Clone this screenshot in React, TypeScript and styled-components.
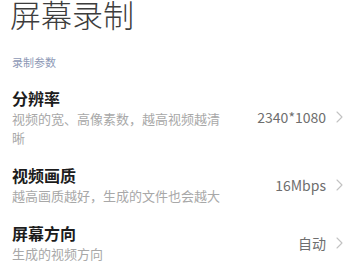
import React from 'react';
import styled, { createGlobalStyle } from 'styled-components';

const GlobalStyle = createGlobalStyle`
  html, body {
    margin: 0;
    padding: 0;
    background: #ffffff;
  }
  body {
    font-family: "Noto Sans CJK SC", "Noto Sans", sans-serif;
  }
`;

const Page = styled.div`
  width: 360px;
  height: 270px;
  overflow: hidden;
  background: #ffffff;
`;

const Title = styled.h1`
  margin: -2px 0 0 0;
  padding: 0 0 0 10px;
  font-size: 31px;
  font-weight: 300;
  line-height: 31px;
  color: #3d3d3d;
`;

const SectionLabel = styled.div`
  margin-top: 25px;
  padding-left: 12px;
  font-size: 11px;
  line-height: 16px;
  color: #8e99b6;
`;

const List = styled.div`
  margin-top: 9px;
  display: flex;
  flex-direction: column;
`;

const Row = styled.div`
  display: flex;
  align-items: center;
  justify-content: space-between;
  gap: 24px;
  padding: 8px 17px 9px 12px;
`;

const Texts = styled.div`
  flex: 1;
  min-width: 0;
  max-width: 212px;
`;

const RowTitle = styled.div`
  font-size: 16px;
  font-weight: 700;
  line-height: 22px;
  color: #1c1c1c;
`;

const RowSub = styled.div`
  font-size: 13px;
  line-height: 19px;
  color: #a8a8a8;
`;

const Value = styled.div`
  display: flex;
  align-items: center;
  gap: 10px;
  flex-shrink: 0;
  font-size: 14px;
  color: #6e6e6e;
  white-space: nowrap;
`;

const Chevron = () => (
  <svg width="7" height="12" viewBox="0 0 7 12" fill="none">
    <path d="M1 1l5 5-5 5" stroke="#c2c2c2" strokeWidth="1.1" strokeLinecap="round" strokeLinejoin="round" />
  </svg>
);

const rows = [
  { title: '分辨率', sub: '视频的宽、高像素数，越高视频越清晰', value: '2340*1080' },
  { title: '视频画质', sub: '越高画质越好，生成的文件也会越大', value: '16Mbps' },
  { title: '屏幕方向', sub: '生成的视频方向', value: '自动' },
];

const App: React.FC = () => {
  return (
    <Page>
      <GlobalStyle />
      <Title>屏幕录制</Title>
      <SectionLabel>录制参数</SectionLabel>
      <List>
        {rows.map((r) => (
          <Row key={r.title}>
            <Texts>
              <RowTitle>{r.title}</RowTitle>
              <RowSub>{r.sub}</RowSub>
            </Texts>
            <Value>
              {r.value}
              <Chevron />
            </Value>
          </Row>
        ))}
      </List>
    </Page>
  );
};

export default App;
